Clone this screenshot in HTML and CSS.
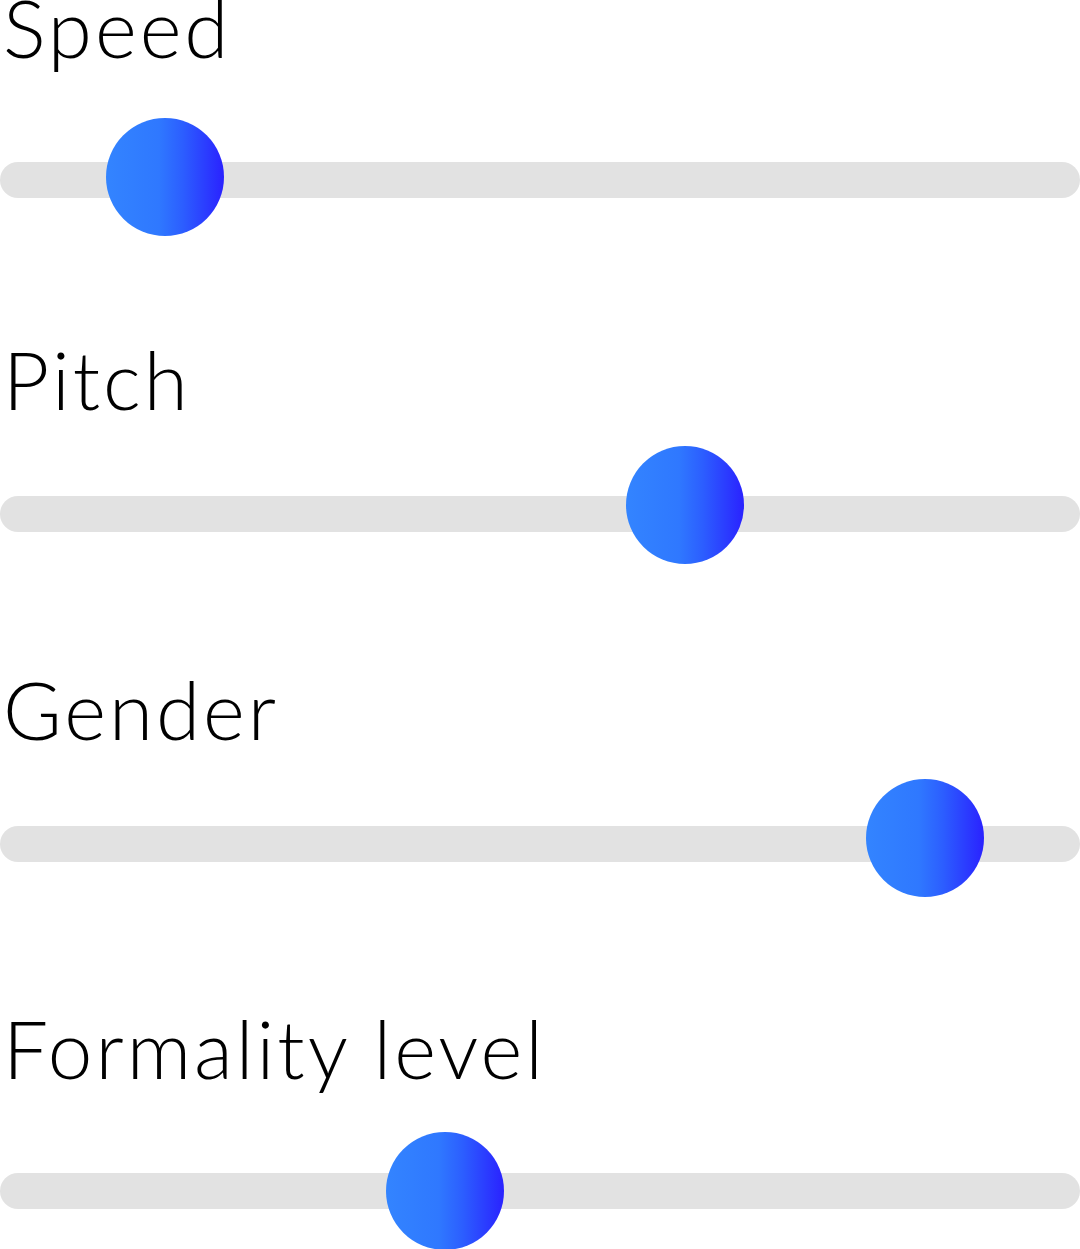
FILE: index.html
```html
<!DOCTYPE html>
<html lang="en">
<head>
  <meta charset="UTF-8">
  <meta name="viewport" content="width=device-width,initial-scale=1.0">
  <title>Voice Settings</title>
  <link rel="stylesheet" href="styles.css">
</head>
<body>
  <main class="settings">
    <section class="setting setting-speed">
      <h2 class="setting-label">Speed</h2>
      <div class="track">
        <span class="thumb" style="left:165px; margin-top:-3px"></span>
      </div>
    </section>
    <section class="setting setting-pitch">
      <h2 class="setting-label">Pitch</h2>
      <div class="track">
        <span class="thumb" style="left:685px; margin-top:-9px"></span>
      </div>
    </section>
    <section class="setting setting-gender">
      <h2 class="setting-label">Gender</h2>
      <div class="track">
        <span class="thumb" style="left:925px; margin-top:-6px"></span>
      </div>
    </section>
    <section class="setting setting-formality">
      <h2 class="setting-label">Formality level</h2>
      <div class="track">
        <span class="thumb" style="left:445px; margin-top:0px"></span>
      </div>
    </section>
  </main>
</body>
</html>
```

FILE: styles.css
```css
html, body {
  margin: 0;
  padding: 0;
  background: #fff;
}

.settings {
  display: flex;
  flex-direction: column;
  margin-top: -13px;
  padding-bottom: 60px;
}

.setting {
  display: flex;
  flex-direction: column;
}
.setting + .setting { margin-top: 141px; }
.setting-gender { margin-top: 137px !important; }
.setting-formality { margin-top: 146px !important; }

.setting-label {
  margin: 0 0 77px 0;
  padding-left: 3px;
  font-family: Lato, "Liberation Sans", sans-serif;
  font-weight: 300;
  font-size: 80px;
  line-height: 80px;
  letter-spacing: 3px;
  color: #000;
}
.setting-speed .setting-label { margin-bottom: 95px; }
.setting-formality .setting-label { margin-bottom: 85px; }

.track {
  position: relative;
  height: 36px;
  border-radius: 18px;
  background: #e2e2e2;
}

.thumb {
  position: absolute;
  top: 50%;
  width: 118px;
  height: 118px;
  border-radius: 50%;
  transform: translate(-50%, -50%);
  background: linear-gradient(90deg, #3384ff 0%, #2f78ff 45%, #2c5eff 65%, #2a22ff 100%);
}
```
